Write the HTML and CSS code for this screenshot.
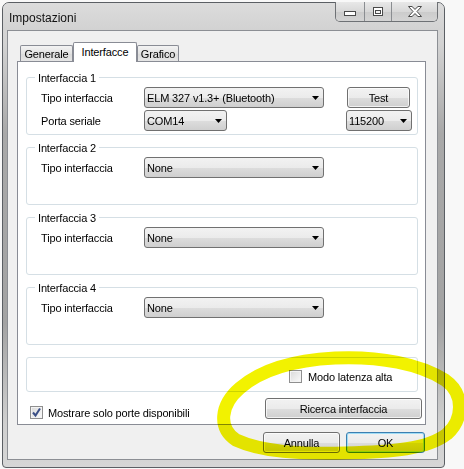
FILE: index.html
```html
<!DOCTYPE html>
<html lang="it">
<head>
<meta charset="utf-8">
<title>Impostazioni</title>
<link rel="stylesheet" href="styles.css">
</head>
<body>
<div class="window">
  <div class="titlebar">
    <span class="title">Impostazioni</span>
    <div class="caption">
      <div class="cap cap-min"><svg width="13" height="6" viewBox="0 0 13 6"><rect x="0.5" y="0.5" width="11" height="4" fill="#fff" stroke="#4a4a4a"/></svg></div>
      <div class="cap cap-max"><svg width="11" height="10" viewBox="0 0 11 10"><rect x="0.5" y="0.5" width="9" height="8" fill="#fff" stroke="#4a4a4a"/><rect x="2.5" y="3.5" width="5" height="3" fill="#f4f4f4" stroke="#4a4a4a"/></svg></div>
      <div class="cap cap-close"><svg width="14" height="11" viewBox="0 0 14 11"><polygon points="0.5,0.5 4,0.5 7,3.4 10,0.5 13.5,0.5 9,5.5 13.5,10.5 10,10.5 7,7.6 4,10.5 0.5,10.5 5,5.5" fill="#fff" stroke="#4a4a4a"/></svg></div>
    </div>
  </div>
  <div class="client">
    <div class="tabs">
      <div class="tab tab-gen">Generale</div>
      <div class="tab tab-sel">Interfacce</div>
      <div class="tab tab-gra">Grafico</div>
    </div>
    <div class="page">
      <div class="group">
        <div class="legend">Interfaccia 1</div>
        <div class="row">
          <span class="lbl">Tipo interfaccia</span>
          <div class="combo combo-wide"><span>ELM 327 v1.3+ (Bluetooth)</span><svg class="arrow" width="7" height="4" viewBox="0 0 7 4"><path d="M0 0h7L3.5 4z"/></svg></div>
          <div class="btn btn-test">Test</div>
        </div>
        <div class="row row2">
          <span class="lbl">Porta seriale</span>
          <div class="combo combo-com"><span>COM14</span><svg class="arrow" width="7" height="4" viewBox="0 0 7 4"><path d="M0 0h7L3.5 4z"/></svg></div>
          <div class="combo combo-baud"><span>115200</span><svg class="arrow" width="7" height="4" viewBox="0 0 7 4"><path d="M0 0h7L3.5 4z"/></svg></div>
        </div>
      </div>
      <div class="group">
        <div class="legend">Interfaccia 2</div>
        <div class="row">
          <span class="lbl">Tipo interfaccia</span>
          <div class="combo combo-wide"><span>None</span><svg class="arrow" width="7" height="4" viewBox="0 0 7 4"><path d="M0 0h7L3.5 4z"/></svg></div>
        </div>
      </div>
      <div class="group">
        <div class="legend">Interfaccia 3</div>
        <div class="row">
          <span class="lbl">Tipo interfaccia</span>
          <div class="combo combo-wide"><span>None</span><svg class="arrow" width="7" height="4" viewBox="0 0 7 4"><path d="M0 0h7L3.5 4z"/></svg></div>
        </div>
      </div>
      <div class="group">
        <div class="legend">Interfaccia 4</div>
        <div class="row">
          <span class="lbl">Tipo interfaccia</span>
          <div class="combo combo-wide"><span>None</span><svg class="arrow" width="7" height="4" viewBox="0 0 7 4"><path d="M0 0h7L3.5 4z"/></svg></div>
        </div>
      </div>
      <div class="group group-opt">
        <label class="check check-lat"><span class="cb"></span><span>Modo latenza alta</span></label>
      </div>
      <div class="footrow">
        <label class="check"><span class="cb cb-on"><svg width="11" height="11" viewBox="0 0 11 11"><path d="M2 5.5l2.5 3L9 1.5" fill="none" stroke="#3b4f86" stroke-width="2"/></svg></span><span>Mostrare solo porte disponibili</span></label>
        <div class="btn btn-search">Ricerca interfaccia</div>
      </div>
    </div>
    <div class="dlgbtns">
      <div class="btn btn-cancel">Annulla</div>
      <div class="btn btn-ok">OK</div>
    </div>
  </div>
</div>
<svg class="highlight" width="464" height="469" viewBox="0 0 464 469"><path d="M236,440 C218,428 220,405 240,388 C262,369 295,360 335,358 C380,356 420,364 445,380 C465,394 463,420 447,434 C428,449 392,452 345,453 C300,454 262,452 236,440 Z" fill="none" stroke="#f2f200" stroke-width="13" stroke-linecap="round"/></svg>
</body>
</html>
```
FILE: styles.css
```css
* { box-sizing: border-box; }
html, body { margin: 0; padding: 0; }
body {
  width: 464px;
  height: 469px;
  overflow: hidden;
  position: relative;
  background: #f8f8f8;
  font-family: "Liberation Sans", Arial, sans-serif;
  font-size: 11px;
  letter-spacing: -0.15px;
  color: #000;
}
.window {
  margin: 2px 0 0 2px;
  width: 443px;
  height: 466px;
  border: 1px solid #5b5f64;
  border-radius: 7px 7px 4px 4px;
  padding: 0 6px 7px 4px;
  display: flex;
  flex-direction: column;
  background: linear-gradient(#d9d9d9 0, #d3d3d3 40px, #a9a9a9 130px, #a3a3a3 320px, #cfcfcf 420px, #d6d6d6 100%);
}
.titlebar {
  height: 27px;
  display: flex;
  align-items: center;
  justify-content: space-between;
  background: linear-gradient(#dcdcdc, #d2d2d2);
  margin: 0 -6px 0 -4px;
  padding: 0 6px 0 4px;
  border-radius: 6px 6px 0 0;
}
.title {
  margin-left: 2px;
  margin-top: 2px;
  font-size: 12px;
  letter-spacing: 0;
  color: #111;
}
.caption {
  align-self: flex-start;
  margin-top: -1px;
  height: 20px;
  display: flex;
  border: 1px solid #6e7175;
  border-top: none;
  border-radius: 0 0 5px 5px;
  overflow: hidden;
}
.cap {
  height: 100%;
  display: flex;
  align-items: center;
  justify-content: center;
  background: linear-gradient(#e8e8e8, #d8d8d8 50%, #cbcbcb 51%, #d4d4d4);
}
.cap svg { display: block; }
.cap-min { width: 29px; border-right: 1px solid #8a8d91; padding-top: 5px; }
.cap-max { width: 27px; border-right: 1px solid #8a8d91; }
.cap-close { width: 45px; }
.client {
  flex: 1;
  border: 1px solid #8c8f94;
  background: #f0f0f0;
  display: flex;
  flex-direction: column;
}
.tabs {
  margin: 11px 0 0 12px;
  height: 19px;
  display: flex;
  align-items: flex-end;
}
.tab {
  height: 16px;
  border: 1px solid #898c95;
  border-bottom: none;
  border-radius: 2px 2px 0 0;
  background: linear-gradient(#f3f3f3, #e3e3e3 50%, #dadada 51%, #e5e5e5);
  display: flex;
  align-items: center;
  justify-content: center;
  padding-top: 1px;
}
.tab-gen { width: 53px; }
.tab-gra { width: 42px; }
.tab-sel {
  width: 64px;
  height: 20px;
  margin-bottom: -1px;
  background: #fff;
  position: relative;
  z-index: 1;
  padding-top: 0;
  padding-bottom: 2px;
}
.page {
  margin-left: 9px;
  width: 409px;
  height: 364px;
  border: 1px solid #898c95;
  background: #fff;
  padding: 15px 7px 4px 8px;
}
.group {
  height: 58px;
  border: 1px solid #d5dfe5;
  border-radius: 3px;
  padding-left: 14px;
}
.group + .group { margin-top: 12px; }
.legend {
  width: fit-content;
  margin: -6px 0 0 -6px;
  padding: 0 3px;
  height: 13px;
  line-height: 13px;
  background: #fff;
}
.row {
  display: flex;
  align-items: center;
  height: 21px;
  margin-top: 2px;
}
.lbl { width: 103px; }
.combo {
  height: 21px;
  border: 1px solid #707070;
  border-radius: 3px;
  background: linear-gradient(#f2f2f2, #ebebeb 50%, #dddddd 51%, #cfcfcf);
  display: flex;
  align-items: center;
  justify-content: space-between;
  padding: 0 4px 0 2px;
  white-space: nowrap;
}
.arrow { display: block; margin-top: 1px; }
.combo-wide { width: 180px; }
.combo-com { width: 83px; }
.combo-baud { width: 66px; margin-left: 119px; }
.btn {
  height: 21px;
  border: 1px solid #707070;
  border-radius: 3px;
  background: linear-gradient(#f2f2f2, #ebebeb 50%, #dddddd 51%, #cfcfcf);
  box-shadow: inset 0 0 0 1px rgba(255,255,255,0.7);
  display: flex;
  align-items: center;
  justify-content: center;
  white-space: nowrap;
}
.btn-test { width: 63px; margin-left: 23px; }
.group-opt {
  height: 35px;
  display: flex;
  align-items: center;
  padding-left: 262px;
  padding-top: 4px;
}
.check {
  display: flex;
  align-items: center;
  gap: 5px;
  white-space: nowrap;
}
.check-lat { gap: 6px; }
.cb {
  width: 13px;
  height: 13px;
  border: 1px solid #8f8f8f;
  background: linear-gradient(135deg, #d9d9d9, #fafafa);
  box-shadow: inset 0 0 0 1px #f3f3f3;
  display: flex;
  align-items: center;
  justify-content: center;
}
.cb svg { display: block; }
.footrow {
  margin-top: 6px;
  margin-right: -4px;
  padding-left: 4px;
  height: 21px;
  display: flex;
  align-items: flex-end;
  justify-content: space-between;
}
.footrow .check { margin-bottom: 0; }
.btn-search { width: 157px; }
.dlgbtns {
  margin-top: 7px;
  padding-right: 12px;
  display: flex;
  justify-content: flex-end;
  gap: 6px;
}
.btn-cancel { width: 77px; }
.btn-ok {
  width: 79px;
  border-color: #3c7fb1;
  box-shadow: inset 0 0 0 1px #9fdcf5;
}
.highlight {
  position: absolute;
  left: 0;
  top: 0;
  pointer-events: none;
  mix-blend-mode: multiply;
}
```
